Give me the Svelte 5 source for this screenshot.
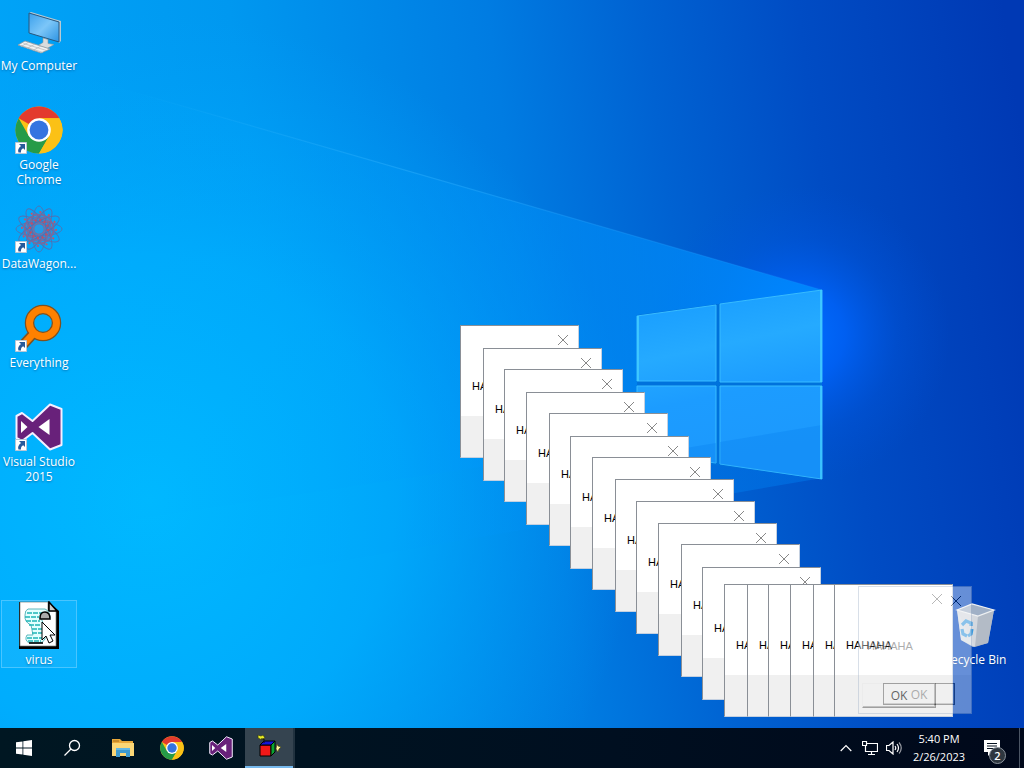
<script>
  const shortcuts = [
    { id: 'computer', label: 'My Computer', row: 1 },
    { id: 'chrome', label: 'Google Chrome', row: 2, link: true },
    { id: 'wagon', label: 'DataWagon...', row: 3, link: true },
    { id: 'everything', label: 'Everything', row: 4, link: true },
    { id: 'vs', label: 'Visual Studio 2015', row: 5, link: true },
    { id: 'virus', label: 'virus', row: 7, selected: true },
    { id: 'bin', label: 'Recycle Bin', row: 7, right: true }
  ];

  const dialogs = [
    [460, 325], [483, 348], [504, 369], [526, 392], [549, 413], [570, 436],
    [592, 457], [615, 479], [636, 501], [658, 523], [681, 544], [702, 567],
    [724, 584], [747, 584], [768, 584], [790, 584], [813, 584], [834, 584]
  ];

  const petals = [0, 30, 60, 90, 120, 150];
</script>

{#snippet chrome()}
  <svg viewBox="0 0 48 48" aria-hidden="true">
    <circle cx="24" cy="24" r="23.5" fill="#fbc116" />
    <path d="M24 24 3.7 12.2A23.5 23.5 0 0 1 44.3 12.2H24Z" fill="#e33b2e" />
    <path d="M3.7 12.2A23.5 23.5 0 0 0 24 47.5L34.2 29.9 24 24 13.8 29.9Z" fill="#269b48" />
    <path d="M34.2 29.9 24 47.5A23.5 23.5 0 0 0 44.3 12.2H24Z" fill="#fbc116" />
    <circle cx="24" cy="24" r="11.8" fill="#fff" />
    <circle cx="24" cy="24" r="9.4" fill="#3474e0" />
  </svg>
{/snippet}

{#snippet studio()}
  <svg viewBox="0 0 48 48" aria-hidden="true">
    <path d="M35 1.5 46.5 6v36L35 46.5 17.500 30 7 38 1.500 35V13L7 10l10.500 8Z" fill="#68217a" stroke="#f6efff" stroke-width="2" stroke-linejoin="round" />
    <path d="M34.500 16v16L23.500 24ZM6 18v12l6.500-6Z" fill="#fff" />
  </svg>
{/snippet}

{#snippet picture(id)}
  {#if id === 'computer'}
    <svg viewBox="0 0 48 48" aria-hidden="true">
      <defs>
        <linearGradient id="screen" x1="0" y1="0" x2="1" y2="1">
          <stop offset="0" stop-color="#3aa0ec" /><stop offset=".5" stop-color="#7cc6f8" /><stop offset="1" stop-color="#2c93e2" />
        </linearGradient>
      </defs>
      <path d="M14 6 16 5 46 14v20l-2 2Z" fill="#b8cad4" />
      <path d="M14 6 44 15v20L14 26Z" fill="url(#screen)" stroke="#28577f" stroke-width="1" />
      <path d="m28 31 5 1.500v4l6 1-7 4-9-3 5-3Z" fill="#d8dcde" stroke="#8c979e" stroke-width=".6" />
      <path d="m3 38 7-4 25 8-9 4Z" fill="#f0f1f1" stroke="#8e989f" stroke-width=".8" />
      <path d="m6 38.500 22 7M8.500 36.500l23 7M14 35l-8 4.500M20 37l-8 4.500M26 39l-8 4.500" stroke="#b1b5b8" stroke-width=".7" />
    </svg>
  {:else if id === 'chrome'}
    {@render chrome()}
  {:else if id === 'wagon'}
    <svg viewBox="0 0 48 48" fill="none" stroke="#566eae" stroke-width=".9" aria-hidden="true">
      {#each petals as angle}
        <ellipse cx="24" cy="24" rx="23" ry="7" transform="rotate({angle} 24 24)" />
        <rect x="10" y="14" width="28" height="20" rx="5" transform="rotate({angle + 15} 24 24)" stroke="#7a6a9c" />
        <ellipse cx="24" cy="24" rx="15" ry="5" transform="rotate({angle + 8} 24 24)" stroke="#96628a" stroke-width=".6" />
      {/each}
      <circle cx="24" cy="24" r="17" stroke="#bd5570" stroke-width="2" stroke-dasharray="2 6.900" />
      <circle cx="24" cy="24" r="9" stroke="#c34c63" stroke-width="2" stroke-dasharray="2 2.700" />
      <circle cx="24" cy="24" r="4" fill="#269be5" stroke="none" />
    </svg>
  {:else if id === 'everything'}
    <svg viewBox="0 0 48 48" fill="none" aria-hidden="true">
      <path d="M18 30 7 42" stroke="#80511f" stroke-width="10" />
      <circle cx="28" cy="19" r="13.500" stroke="#80511f" stroke-width="9.500" />
      <circle cx="28" cy="19" r="13.500" stroke="#ff8100" stroke-width="7" />
      <path d="M19 29 8 41" stroke="#ff8100" stroke-width="7" />
    </svg>
  {:else if id === 'vs'}
    {@render studio()}
  {:else if id === 'virus'}
    <svg viewBox="0 0 48 48" aria-hidden="true">
      <path d="M4 1h30l10 9v39H4Z" fill="#000" />
      <path d="M5 1h28v9h8v35H5Z" fill="#fff" stroke="#77817f" stroke-width=".7" />
      <path d="M34 1v9h8Z" fill="#ccc" stroke="#000" stroke-width="1.500" />
      <path d="M13 8h17q5 2 5 9h-9q2 5 4 9v12q-2 4-6 4H14q-5-3-2-8h6l-2-10q-7-3-6-10 0-5 3-6Z" fill="#e2ffff" stroke="#3aa5ab" stroke-width=".8" />
      <path d="M12 12h17M10 16h14M11 20h14M14 24h12M17 28h11M17 32h11M12 37h15M13 40h13" stroke="#1fb5b7" stroke-width="1.600" stroke-dasharray="5 1" />
      <path d="M25 17q0-6 5-6t5 7H25Z" fill="#aaa" stroke="#000" stroke-width="1.500" />
      <path d="M14 42h14" stroke="#000" stroke-width="1.600" />
      <path d="M27 21v18l4-4 3 7 4-2-3-6h5Z" fill="#fff" stroke="#000" stroke-width="1" />
    </svg>
  {:else}
    <svg viewBox="0 0 48 48" aria-hidden="true">
      <path d="M6 9 21 3 43 9 37 42 22 46 10 39Z" fill="#d2d8df" opacity=".9" />
      <path d="m6 9 21 6 16-6-6 33-13 4Z" fill="#b2b8c2" opacity=".85" />
      <path d="m6 9 21 6-3 31-14-7Z" fill="#dfe2e6" opacity=".75" />
      <path d="M6 9 21 3l22 6-16 6Z" fill="#a0b0c6" stroke="#eef0f2" stroke-width="1.200" />
      <path d="m11 24 4-4 5 2v3M11 28l1 5 4 2M21 28l-1 5-3 2" fill="none" stroke="#3a9ade" stroke-width="3.200" />
    </svg>
  {/if}
{/snippet}

{#snippet message()}
  <div class="body">
    <button class="close" aria-label="Close">
      <svg viewBox="0 0 10 10" aria-hidden="true"><path d="m0 0 10 10M10 0 0 10" /></svg>
    </button>
    <p>HAHAHA</p>
  </div>
  <div class="foot"><button class="ok">OK</button></div>
{/snippet}

<main class="screen">
  <svg class="wallpaper" viewBox="0 0 1024 768" preserveAspectRatio="none" aria-hidden="true">
    <defs>
      <linearGradient id="sky" x1="0" y1=".3" x2="1" y2=".2">
        <stop offset="0" stop-color="#00a4f8" />
        <stop offset=".25" stop-color="#0098f0" />
        <stop offset=".5" stop-color="#007ce2" />
        <stop offset=".65" stop-color="#0062d2" />
        <stop offset=".8" stop-color="#004cc4" />
        <stop offset="1" stop-color="#0039b4" />
      </linearGradient>
      <radialGradient id="left" gradientUnits="userSpaceOnUse" cx="150" cy="500" r="490">
        <stop offset="0" stop-color="#00b9ff" />
        <stop offset=".5" stop-color="#00b0ff" stop-opacity=".75" />
        <stop offset="1" stop-color="#00a0fa" stop-opacity="0" />
      </radialGradient>
      <radialGradient id="glow" gradientUnits="userSpaceOnUse" cx="800" cy="335" r="150">
        <stop offset="0" stop-color="#006eff" />
        <stop offset=".3" stop-color="#0064fc" stop-opacity=".8" />
        <stop offset=".65" stop-color="#005ae8" stop-opacity=".3" />
        <stop offset="1" stop-color="#0054dc" stop-opacity="0" />
      </radialGradient>
      <linearGradient id="beam" x1="0" x2="1">
        <stop offset="0" stop-color="#00b4ff" stop-opacity="0" />
        <stop offset=".4" stop-color="#00a0fc" stop-opacity=".15" />
        <stop offset=".7" stop-color="#0092fc" stop-opacity=".5" />
        <stop offset="1" stop-color="#008cff" stop-opacity=".85" />
      </linearGradient>
      <linearGradient id="ray" x1="0" x2="1">
        <stop offset="0" stop-color="#4cc4ff" stop-opacity="0" />
        <stop offset=".4" stop-color="#3cb8ff" stop-opacity=".35" />
        <stop offset="1" stop-color="#1b95ff" stop-opacity=".2" />
      </linearGradient>
      <linearGradient id="pane" gradientUnits="userSpaceOnUse" x1="700" y1="290" x2="740" y2="479">
        <stop offset="0" stop-color="#189dff" />
        <stop offset=".3" stop-color="#25aaff" />
        <stop offset=".55" stop-color="#1c9cff" />
        <stop offset="1" stop-color="#1c98fc" />
      </linearGradient>
    </defs>
    <path d="M0 0h1024v768H0Z" fill="url(#sky)" />
    <path d="M0 0h1024v768H0Z" fill="url(#left)" />
    <path d="M0 0h1024v768H0Z" fill="url(#glow)" />
    <path d="M100 82 822 290v125L0 540V82Z" fill="url(#beam)" />
    <path d="M822 415v63L0 620v-80Z" fill="url(#beam)" opacity=".4" />
    <path d="M130 91 822 290" stroke="url(#ray)" stroke-width="1.200" fill="none" />
    <path d="M637 315 822 290V479L637 455Z" fill="#0072dc" />
    <g fill="url(#pane)" stroke="#38bcff" stroke-width="1">
      <path d="m637 316 79-11v76h-79Z" />
      <path d="m720 304 102-14v92H720Z" />
      <path d="M637 386h79v77l-79-10Z" />
      <path d="M720 386h102v93l-102-15Z" />
    </g>
    <path d="m637 456 79-13v20l-79-10ZM720 442l102-17v54l-102-15Z" fill="#0078ec" opacity=".25" />
    <path d="M821 290v92m0 4v93M638 316v65" stroke="#46d0ff" stroke-width="1.500" />
  </svg>

  <section class="desktop" aria-label="Desktop">
    {#each shortcuts as item}
      <button class="shortcut" class:selected={item.selected} class:right={item.right} style="grid-row: {item.row}">
        <span class="art">
          {@render picture(item.id)}
          {#if item.link}
            <svg class="arrow" viewBox="0 0 12 12" aria-hidden="true">
              <path d="M.5.5h11v11H.5Z" fill="#fff" stroke="#b8c6d4" />
              <path d="M4 2h6v6L8.200 6.200Q5.500 7.500 6 10.500H3.500Q2 7 6 4Z" fill="#275a9b" />
            </svg>
          {/if}
        </span>
        <span class="name">{item.label}</span>
      </button>
    {/each}
  </section>

  {#each dialogs as [x, y]}
    <div class="dialog" role="dialog" aria-label="Message" style="left: {x}px; top: {y}px">
      {@render message()}
    </div>
  {/each}
  <div class="dialog ghost" role="dialog" aria-label="Message" style="left: 858px; top: 586px">
    {@render message()}
  </div>

  <nav class="taskbar" aria-label="Taskbar">
    <button class="task system" aria-label="Start">
      <svg width="16" height="16" viewBox="0 0 16 16" fill="#fff" aria-hidden="true"><path d="m0 2.300 6.500-.9v6.200H0ZM7.300 1.300 16 0v7.600H7.300ZM0 8.400h6.500v6.200L0 13.700ZM7.300 8.400H16V16l-8.700-1.300Z" /></svg>
    </button>
    <button class="task system" aria-label="Search">
      <svg width="18" height="18" viewBox="0 0 18 18" fill="none" stroke="#fff" stroke-width="1.300" aria-hidden="true"><circle cx="11.500" cy="6.500" r="5" /><path d="m8 10-6.500 6.500" /></svg>
    </button>
    <div class="apps">
      <button class="task" aria-label="File Explorer">
        <svg width="24" height="24" viewBox="0 0 24 24" aria-hidden="true">
          <path d="M1 3h8l2 2h11v15H1Z" fill="#e9a93a" /><path d="M1 7h22v13H1Z" fill="#fbd776" /><path d="M2 4h6v2H2Z" fill="#c88c2a" />
          <path d="M5 21v-9h14v9h-4v-4H9v4Z" fill="#3e9bd0" /><path d="M5 12h14v2H5Z" fill="#62b8e5" />
        </svg>
      </button>
      <button class="task app" aria-label="Google Chrome">{@render chrome()}</button>
      <button class="task app" aria-label="Visual Studio">{@render studio()}</button>
      <button class="task active" aria-label="Script">
        <svg width="24" height="24" viewBox="0 0 24 24" aria-hidden="true">
          <path d="M3 10h11v11H3Z" fill="#f21818" stroke="#000" /><path d="m3 10 4-4h11l-4 4Z" fill="#1515d8" stroke="#000" />
          <path d="m14 10 4-4v11l-4 4Z" fill="#0ba331" stroke="#000" />
          <path d="m1 0 3 1 2-1 2 3-3 2-4-2Z" fill="#e8ed24" stroke="#333b12" stroke-width=".7" />
          <path d="m20 9 1 2 3 1-2 2-1 3-2-3Z" fill="#fff49b" stroke="#47470a" stroke-width=".6" /><path d="M4 4h3v4" fill="none" stroke="#111" />
        </svg>
      </button>
    </div>

    <div class="tray">
      <button class="mini" aria-label="Show hidden icons"><svg width="12" height="8" viewBox="0 0 12 8"><path d="m.7 7 5.300-5.500L11.300 7" /></svg></button>
      <button class="mini" aria-label="Network"><svg width="16" height="16" viewBox="0 0 16 16"><path d="M5 3.500h10.500v8H3.500V7M9.500 11.500v3M6 14.500h7M.5 1.500h4v4h-4ZM3.500 5.500V9" /></svg></button>
      <button class="mini" aria-label="Volume"><svg width="16" height="14" viewBox="0 0 16 14"><path d="M.5 4.500H3L7 1v12L3 9.500H.5ZM9 5q1.500 2 0 4M11 3q3 4 0 8" /><path d="M13 1.500q4.500 5.500 0 11" opacity=".6" /></svg></button>
      <button class="clock"><span>5:40 PM</span><span>2/26/2023</span></button>
      <button class="notes" aria-label="Notifications">
        <svg width="18" height="18" viewBox="0 0 18 18" aria-hidden="true"><path d="M1 1h16v12H9l-4 4v-4H1Z" fill="#fff" /><path d="M4 4.500h10M4 7h10M4 9.500h7" stroke="#071321" /></svg>
        <span class="badge">2</span>
      </button>
      <button class="peek" aria-label="Show desktop"></button>
    </div>
  </nav>
</main>

<style>
  :global(body) { margin: 0; }
  button { margin: 0; padding: 0; border: 0; background: none; color: inherit; font: inherit; }
  .screen {
    position: relative;
    display: flex;
    flex-direction: column;
    min-height: 100vh;
    overflow: hidden;
    color: #fff;
    font: 12px/15px "Open Sans", "Noto Sans", sans-serif;
  }
  .wallpaper { position: absolute; inset: 0; width: 100%; height: 100%; }
  .desktop {
    position: relative;
    flex: 1;
    display: grid;
    grid-template-columns: 78px 78px;
    grid-auto-rows: 99px;
    justify-content: space-between;
    align-content: start;
    padding: 6px 10px 0 0;
  }
  .shortcut {
    grid-column: 1;
    align-self: start;
    display: flex;
    flex-direction: column;
    align-items: center;
    gap: 3px;
    margin: 0 1px;
    padding: 1px 0;
  }
  .right { grid-column: 2; }
  .selected { outline: 1px solid #49c5ff; outline-offset: -1px; background: #3abfff40; }
  .art { position: relative; width: 48px; height: 48px; }
  .art :global(svg) { display: block; width: 48px; height: 48px; }
  .art .arrow { position: absolute; left: 0; bottom: 0; width: 12px; height: 12px; }
  .name { width: 78px; text-shadow: 0 1px 2px #00376e80; }

  .dialog {
    position: absolute;
    box-sizing: border-box;
    width: 119px;
    border: 1px solid;
    border-color: #8a8f96 #c4d0e0 #c4d0e0 #8a8f96;
    background: #fff;
    color: #000;
    font: 11px/13px "Liberation Sans", Arial, sans-serif;
  }
  .body { display: flex; flex-direction: column; height: 90px; }
  .close { align-self: flex-end; height: 28px; padding: 0 10px; }
  .close svg { display: block; width: 10px; height: 10px; fill: none; stroke: #888; }
  .body p { margin: 26px 0 0 11px; }
  .foot { display: flex; justify-content: flex-end; height: 25px; padding: 8px 16px 8px 0; background: #f0f0f0; }
  .ok {
    box-sizing: border-box;
    width: 74px;
    border: 1px solid;
    border-color: #e8e8e8 #696969 #696969 #e8e8e8;
    box-shadow: inset -1px -1px #a0a0a0;
    background: #f0f0f0;
    font: 12px/15px "Open Sans", "Noto Sans", sans-serif;
  }
  .ghost { width: 114px; opacity: .4; border-color: #a0b0c8; }
  .ghost .body { height: 88px; }
  .ghost p { margin: 25px 0 0 8px; color: #333; }
  .ghost .foot { height: 22px; }
  .ghost .ok { width: 72px; border-color: #333; color: #444; }
  .ghost .close svg { stroke: #000; }

  .taskbar {
    position: relative;
    display: flex;
    height: 40px;
    background: linear-gradient(90deg, #001722, #000f20 60%, #00081a);
  }
  .apps { display: flex; margin-left: 2px; }
  .task { display: grid; place-items: center; width: 49px; }
  .system { width: 48px; }
  .app :global(svg) { width: 24px; height: 24px; }
  .active { border-bottom: 2px solid #76b9ed; background: #354450; box-shadow: 2px 0 #21323f; width: 48px; }
  .tray { display: flex; margin-left: auto; }
  .mini { display: grid; place-items: center; width: 24px; }
  .mini svg { fill: none; stroke: #fff; stroke-width: 1.2; }
  .clock { display: flex; flex-direction: column; justify-content: center; width: 66px; font-size: 11px; line-height: 18px; }
  .notes { position: relative; width: 47px; padding-right: 8px; }
  .notes svg { vertical-align: middle; }
  .badge {
    position: absolute;
    right: 13px;
    bottom: 4px;
    width: 15px;
    border: 1px solid #8c949d;
    border-radius: 50%;
    background: #2e3740;
    font-size: 11px;
    font-weight: 600;
  }
  .peek { width: 5px; border-left: 1px solid #4b5564; }
</style>
